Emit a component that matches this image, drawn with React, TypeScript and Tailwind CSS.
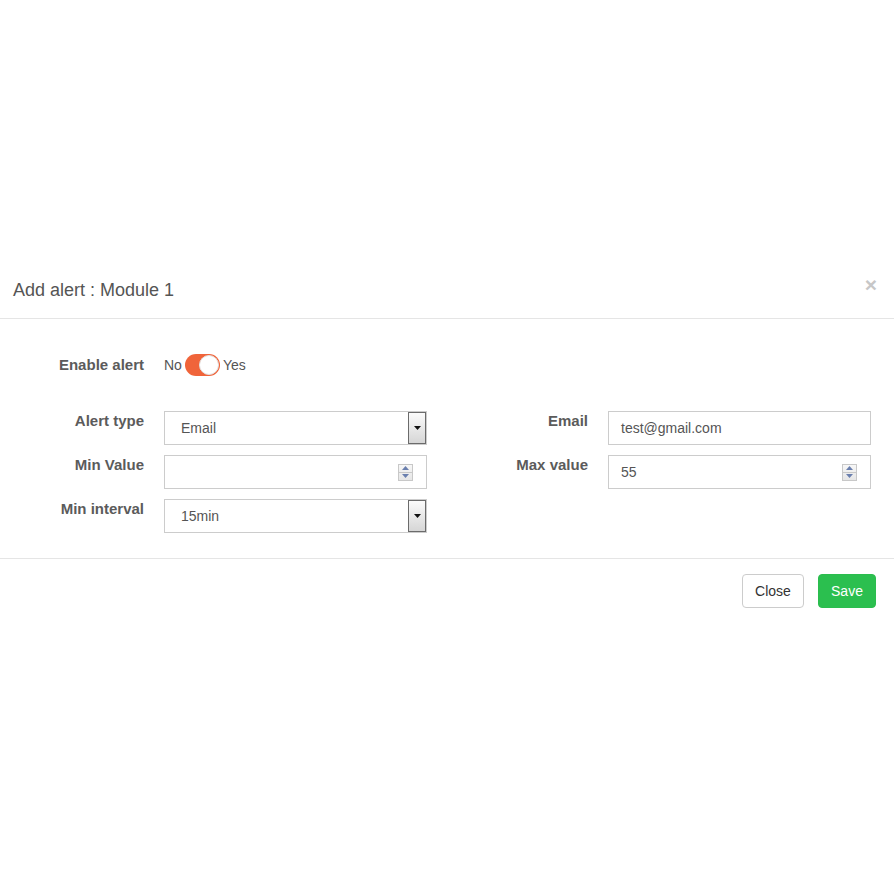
import React from 'react';

const SelectBox = ({ value }: { value: string }) => (
  <div className="flex h-[34px] w-[263px] items-stretch border border-[#cccccc] bg-white">
    <span className="flex flex-1 items-center pl-[16px] text-[14px] text-[#555555]">{value}</span>
    <div className="flex w-[18px] items-center justify-center border border-[#6b6b6b] bg-gradient-to-b from-[#fbfbfb] to-[#d6d6d6]">
      <svg width="7" height="4" viewBox="0 0 7 4">
        <path d="M0 0h7L3.5 4z" fill="#111" />
      </svg>
    </div>
  </div>
);

const Spinner = () => (
  <div className="flex h-[17px] w-[15px] flex-col border border-[#c8c8c8] bg-gradient-to-b from-[#f7f7f7] to-[#e6e6e6]">
    <div className="flex flex-1 items-center justify-center border-b border-[#c8c8c8]">
      <svg width="7" height="4" viewBox="0 0 7 4">
        <path d="M3.5 0L7 4H0z" fill="#6a7fae" />
      </svg>
    </div>
    <div className="flex flex-1 items-center justify-center">
      <svg width="7" height="4" viewBox="0 0 7 4">
        <path d="M0 0h7L3.5 4z" fill="#6a7fae" />
      </svg>
    </div>
  </div>
);

const NumberBox = ({ value }: { value?: string }) => (
  <div className="flex h-[34px] w-[263px] items-center justify-between border border-[#cccccc] bg-white pl-[12px] pr-[13px]">
    <span className="text-[14px] text-[#555555]">{value ?? ''}</span>
    <Spinner />
  </div>
);

const TextBox = ({ value }: { value: string }) => (
  <div className="flex h-[34px] w-[263px] items-center border border-[#cccccc] bg-white pl-[12px]">
    <span className="text-[14px] text-[#555555]">{value}</span>
  </div>
);

const Label = ({ children }: { children: React.ReactNode }) => (
  <div className="text-right text-[15px] font-bold leading-[20px] text-[#5b5b5b]">{children}</div>
);

export default function App() {
  return (
    <div className="min-h-[894px] bg-white pt-[269px] font-['Liberation_Sans',Arial,sans-serif]">
      <div className="relative flex items-center border-b border-[#e5e5e5] px-[13px] pb-[16px] pt-[9px]">
        <h4 className="text-[18px] leading-[24px] text-[#555555]">Add alert : Module 1</h4>
        <span className="absolute right-[17px] top-[5px] text-[21px] font-bold leading-[21px] text-[#c7c7c7]">×</span>
      </div>

      <div className="pb-[25px] pt-[35px]">
        <div className="grid grid-cols-[144px_auto] items-center gap-x-[20px]">
          <Label>Enable alert</Label>
          <div className="flex items-center text-[14px] text-[#555555]">
            <span>No</span>
            <div className="ml-[3px] flex h-[22px] w-[35px] items-center justify-end rounded-full bg-[#f0643a] pr-[1px]">
              <div className="h-[20px] w-[20px] rounded-full border border-[#e2e2e2] bg-white" />
            </div>
            <span className="ml-[3px]">Yes</span>
          </div>
        </div>

        <div className="mt-[35px] grid grid-cols-[144px_263px_141px_263px] gap-x-[20px] gap-y-[10px]">
          <Label>Alert type</Label>
          <SelectBox value="Email" />
          <Label>Email</Label>
          <TextBox value="test@gmail.com" />

          <Label>Min Value</Label>
          <NumberBox />
          <Label>Max value</Label>
          <NumberBox value="55" />

          <Label>Min interval</Label>
          <SelectBox value="15min" />
          <div />
          <div />
        </div>
      </div>

      <div className="flex justify-end gap-[14px] border-t border-[#e5e5e5] pb-[15px] pr-[18px] pt-[15px]">
        <button className="h-[34px] w-[62px] rounded-[4px] border border-[#cccccc] bg-white text-[14px] text-[#333333]">
          Close
        </button>
        <button className="h-[34px] w-[58px] rounded-[4px] border border-[#2bbd4e] bg-[#2bbf4f] text-[14px] text-white">
          Save
        </button>
      </div>
    </div>
  );
}
